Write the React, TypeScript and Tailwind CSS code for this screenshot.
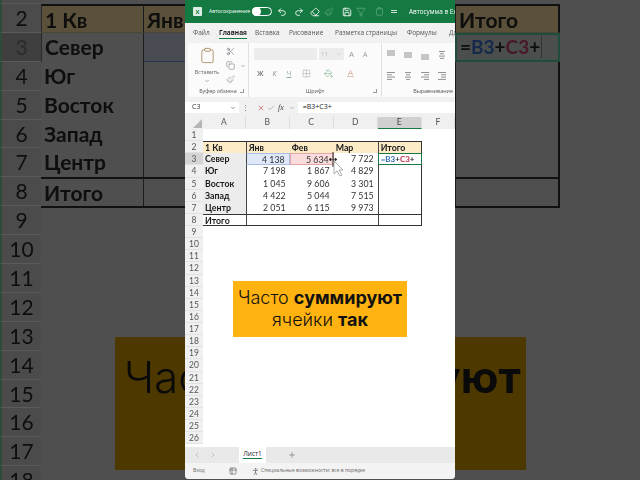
import {
  Baseline,
  Check,
  ChevronDown,
  ChevronLeft,
  ChevronRight,
  Clipboard,
  Copy,
  Eraser,
  Filter,
  Grid2x2,
  PaintBucket,
  Paintbrush,
  PersonStanding,
  Plus,
  Redo2,
  Save,
  Scissors,
  Table2,
  Undo2,
  X,
} from "lucide-react";

const regions = [
  ["Север", "4 138", "5 634", "7 722"],
  ["Юг", "7 198", "1 867", "4 829"],
  ["Восток", "1 045", "9 606", "3 301"],
  ["Запад", "4 422", "5 044", "7 515"],
  ["Центр", "2 051", "6 115", "9 973"],
];
const heads = ["1 Кв", "Янв", "Фев", "Мар", "Итого"];
const ribbonTabs = [
  { label: "Файл", w: "w-[26px]" },
  { label: "Главная", w: "w-[36px]", active: true },
  { label: "Вставка", w: "w-[34px]" },
  { label: "Рисование", w: "w-[46px]" },
  { label: "Разметка страницы", w: "w-[72px]" },
  { label: "Формулы", w: "w-[42px]" },
  { label: "Данные", w: "w-[30px]" },
];

function cellText(r: number, c: number) {
  if (r === 2) return heads[c];
  if (r >= 3 && r <= 7 && c < 4) return regions[r - 3][c];
  if (r === 8 && c === 0) return "Итого";
  return "";
}

// the zoomed sheet behind the window: only what sticks out beside it has text
function backText(r: number, c: number) {
  if (r === 2) return c === 0 || c === 1 || c === 4 ? heads[c] : "";
  return c === 0 ? cellText(r, c) : "";
}

function BackSheet() {
  const rows = Array.from({ length: 18 }, (_, i) => i + 1);
  return (
    <div className="grid grid-cols-[41px_102px_104px_104px_104px_104.7px_1fr] font-['Lato',sans-serif] text-[21px] text-[#0e0e0e] blur-[0.7px]">
      {rows.map((r) => {
        const h = r === 1 ? "h-[4px]" : "h-[28.9px]";
        const inTable = r >= 2 && r <= 8;
        return [
          <div
            key={`n${r}`}
            className={`${h} overflow-hidden border-l-2 border-b border-l-[#2d4a3b] border-b-[#5b5b5b] text-center leading-[28px] ${r === 3 ? "bg-[#3f3f3f] text-[#2b2b2b]" : "bg-[#4b4b4b]"}`}
          >
            {r > 1 ? r : ""}
          </div>,
          ...[0, 1, 2, 3, 4].map((c) => {
            const active = r === 3 && c === 4;
            const bold = c === 0 || r === 2;
            let cls = "bg-[#4f4f4f]";
            if (r === 2) cls = "bg-[#5b503a] border-b border-b-[#4a4638]";
            if (r === 3 && c === 1) cls = "bg-[#484b52] border-b border-b-[#2b3550]";
            if (active) cls = "bg-[#4a4f4d] border-2 border-[#1f4d3a]";
            return (
              <div
                key={`${r}-${c}`}
                className={`${h} overflow-hidden whitespace-nowrap px-[3px] leading-[28px] ${cls} ${bold ? "font-bold" : ""} ${r === 2 || r === 8 || r === 9 ? "border-t-2 border-t-[#111]" : ""} ${inTable && (c === 1 || c === 4) && !active ? "border-l border-l-[#1c1c1c]" : ""} ${inTable && c === 4 && !active ? "border-r-2 border-r-[#111]" : ""} ${inTable && c === 0 && r < 4 ? "border-l border-l-[#2a2a2a]" : ""}`}
              >
                {active ? (
                  <span className="flex items-center text-[19px] font-bold leading-[24px]">
                    =<span className="text-[#16294d]">B3</span>+<span className="text-[#481826]">C3</span>+
                    <span className="ml-[1px] h-[22px] w-px bg-[#333]" />
                  </span>
                ) : (
                  backText(r, c)
                )}
              </div>
            );
          }),
          <div key={`f${r}`} className={`${h} bg-[#4f4f4f]`} />,
        ];
      })}
    </div>
  );
}

function Lines({ kind }: { kind: "l" | "c" | "r" | "top" | "mid" | "bot" | "in" }) {
  const sets: Record<string, number[][]> = {
    l: [[1, 9], [1, 6], [1, 9], [1, 6]],
    c: [[2, 8], [3, 7], [2, 8], [3, 7]],
    r: [[1, 9], [4, 9], [1, 9], [4, 9]],
    in: [[1, 9], [4, 9], [4, 9], [1, 9]],
  };
  const y = { top: [1, 3, 5], mid: [3, 5, 7], bot: [5, 7, 9] }[kind as "top"];
  return (
    <svg width="10" height="10" viewBox="0 0 10 10" className="shrink-0 text-[#777]" stroke="currentColor" strokeWidth="0.8">
      {y
        ? y.map((v) => <line key={v} x1="1" x2="9" y1={v} y2={v} />)
        : sets[kind].map((s, i) => <line key={i} x1={s[0]} x2={s[1]} y1={1.5 + i * 2.3} y2={1.5 + i * 2.3} />)}
    </svg>
  );
}

function TitleBar() {
  return (
    <div className="flex h-[23px] shrink-0 items-center overflow-hidden bg-[#157a42] text-white">
      <div className="ml-[8px] flex h-[9px] w-[9px] shrink-0 items-center justify-center rounded-[1px] bg-[#dfeee5] text-[6px] font-bold leading-none text-[#157a42]">
        X
      </div>
      <span className="ml-[7px] w-[42px] shrink-0 whitespace-nowrap text-[5.1px]">Автосохранение</span>
      <div className="ml-[1px] flex h-[9px] w-[20px] shrink-0 items-center rounded-full border border-white">
        <div className="ml-[-1px] h-[9px] w-[9px] rounded-full bg-white" />
      </div>
      <Undo2 size={10} className="ml-[5px] shrink-0" />
      <Redo2 size={10} className="ml-[7px] shrink-0" />
      <Eraser size={10} className="ml-[6px] shrink-0" />
      <Paintbrush size={10} className="ml-[4px] shrink-0 text-[#4f9b70]" />
      <Save size={10} className="ml-[8px] shrink-0" />
      <Filter size={10} className="ml-[4px] shrink-0 text-[#5da67d]" />
      <Clipboard size={9} className="ml-[9px] shrink-0 text-[#5da67d]" />
      <div className="ml-[7px] h-[3px] w-[6px] shrink-0 border-y border-white/80" />
      <span className="ml-[12px] shrink-0 whitespace-nowrap text-[6.4px]">Автосумма в Excel</span>
    </div>
  );
}

function RibbonTabs() {
  return (
    <div className="flex h-[20px] shrink-0 items-center overflow-hidden pl-[8px] text-[6.5px] text-[#555]">
      {ribbonTabs.map((t) => (
        <div key={t.label} className={`${t.w} shrink-0 whitespace-nowrap`}>
          <span className={t.active ? "border-b border-[#157a42] pb-[1px] font-bold text-[#222]" : ""}>{t.label}</span>
        </div>
      ))}
    </div>
  );
}

function GroupLabel({ text, launcher }: { text: string; launcher?: boolean }) {
  return (
    <div className="relative flex h-[11px] items-center justify-center whitespace-nowrap text-[5.4px] text-[#555]">
      {text}
      {launcher && <span className="absolute right-[4px] top-[3px] h-[4px] w-[4px] border-r border-b border-[#999]" />}
    </div>
  );
}

function Ribbon() {
  return (
    <div className="ml-[3px] flex h-[54px] shrink-0 rounded-l-[3px] bg-[#fbfbfb] text-[#666]">
      <div className="flex w-[61px] shrink-0 flex-col border-r border-[#e0e0e0]">
        <div className="flex flex-1 pt-[4px]">
          <div className="flex w-[38px] flex-col items-center">
            <Clipboard size={17} strokeWidth={1.2} className="text-[#a8875c]" />
            <span className="mt-[6px] text-[5.6px] leading-none">Вставить</span>
            <ChevronDown size={6} className="mt-[2px]" />
          </div>
          <div className="flex flex-col gap-[5px]">
            <Scissors size={9} strokeWidth={1.3} className="text-[#556]" />
            <div className="flex items-center gap-[5px]">
              <Copy size={9} strokeWidth={1.3} />
              <ChevronDown size={6} />
            </div>
            <Paintbrush size={9} strokeWidth={1.3} className="text-[#999]" />
          </div>
        </div>
        <GroupLabel text="Буфер обмена" launcher />
      </div>
      <div className="flex w-[133px] shrink-0 flex-col border-r border-[#e0e0e0]">
        <div className="flex flex-1 flex-col gap-[9px] px-[5px] pt-[5px]">
          <div className="flex h-[12px] items-center">
            <div className="h-[12px] w-[63px] rounded-[1px] bg-[#ececec]" />
            <div className="ml-[2px] flex h-[12px] w-[25px] items-center justify-between rounded-[1px] bg-[#ececec] px-[2px] text-[6px] text-[#bbb]">
              11
              <ChevronDown size={6} />
            </div>
            <span className="ml-[5px] text-[8px] leading-none text-[#999]">A</span>
            <span className="ml-[9px] text-[7px] leading-none text-[#999]">A</span>
          </div>
          <div className="flex items-center text-[#888]">
            <span className="ml-[3px] text-[7px] font-bold leading-none">Ж</span>
            <span className="ml-[9px] text-[7px] italic leading-none">К</span>
            <span className="ml-[10px] text-[7px] underline leading-none text-[#8aa]">Ч</span>
            <Grid2x2 size={9} strokeWidth={1} className="ml-[11px]" />
            <PaintBucket size={9} strokeWidth={1.2} className="ml-[13px] text-[#5a9a6a]" />
            <Baseline size={9} strokeWidth={1.2} className="ml-[13px] text-[#c08060]" />
          </div>
        </div>
        <GroupLabel text="Шрифт" launcher />
      </div>
      <div className="flex min-w-0 flex-1 flex-col">
        <div className="flex flex-1 flex-col gap-[11px] pl-[4px] pt-[7px]">
          <div className="flex gap-[7px]">
            <Lines kind="top" />
            <Lines kind="mid" />
            <Lines kind="bot" />
            <Lines kind="c" />
          </div>
          <div className="flex gap-[7px]">
            <Lines kind="l" />
            <Lines kind="c" />
            <Lines kind="r" />
            <Lines kind="in" />
          </div>
        </div>
        <div className="flex h-[11px] items-center justify-end whitespace-nowrap pr-[2px] text-[5.4px] text-[#555]">Выравнивание</div>
      </div>
    </div>
  );
}

function FormulaBar() {
  return (
    <div className="mt-[5px] flex h-[11px] shrink-0 items-center text-[#777]">
      <div className="flex h-full w-[54px] shrink-0 items-center justify-between bg-white pl-[7px] pr-[3px] text-[7px] text-[#333]">
        C3
        <ChevronDown size={6} />
      </div>
      <span className="ml-[3px] text-[7px] leading-none">⋮</span>
      <X size={8} className="ml-[8px] text-[#c05050]" />
      <Check size={8} className="ml-[2px] text-[#9a9a9a]" />
      <span className="ml-[3px] font-['Liberation_Serif',serif] text-[8px] italic leading-none text-[#444]">fx</span>
      <ChevronDown size={6} className="ml-[5px]" />
      <div className="ml-[3px] flex h-full flex-1 items-center bg-white pl-[5px] text-[7px] text-[#222]">=B3+C3+</div>
    </div>
  );
}

function FrontSheet() {
  const rows = Array.from({ length: 26 }, (_, i) => i + 1);
  const letters = ["A", "B", "C", "D", "E", "F"];
  return (
    <div className="relative min-h-0 flex-1 bg-white">
      <div className="grid h-[16px] grid-cols-[18px_42.7px_44px_44px_44px_44px_1fr] items-end bg-[#f0f0f0] text-center font-['Lato',sans-serif] text-[8.5px] text-[#555]">
        <div className="flex h-full items-end justify-end pb-[1px] pr-[1px]">
          <div className="h-0 w-0 border-b-[9px] border-l-[9px] border-b-[#b5b5b5] border-l-transparent" />
        </div>
        {letters.map((l) => (
          <div key={l} className={`h-[12px] border-r border-[#dcdcdc] leading-[11px] ${l === "E" ? "border-b border-b-[#157a42] bg-[#d0d0d0] text-[#444]" : ""}`}>
            {l}
          </div>
        ))}
      </div>
      <div className="grid auto-rows-[12.13px] grid-cols-[18px_42.7px_44px_44px_44px_44px_1fr] font-['Lato',sans-serif] text-[8.8px] leading-[11.5px] text-[#333]">
        {rows.map((r) => [
          <div key={`n${r}`} className={`border-b border-[#e2e2e2] text-center text-[8.5px] leading-[12px] text-[#555] ${r === 3 ? "bg-[#d4d4d4] text-[#1a7a48]" : "bg-[#f0f0f0]"}`}>
            {r}
          </div>,
          ...[0, 1, 2, 3, 4].map((c) => {
            const active = r === 3 && c === 4;
            const inTable = r >= 2 && r <= 8;
            let bg = "";
            if (r === 2) bg = "bg-[#fdebc8]";
            else if (r >= 3 && r <= 7 && c === 0) bg = "bg-[#ececec]";
            let frame = "";
            if (r === 3 && c === 1) frame = "bg-[#dfe8f8] border border-[#a9c0e6]";
            if (r === 3 && c === 2) frame = "bg-[#fbdcdc] border border-[#e8a5a5]";
            if (active) frame = "border border-[#157a42]";
            return (
              <div
                key={`${r}-${c}`}
                className={`overflow-visible whitespace-nowrap pl-[2px] ${bg} ${frame} ${c === 0 || r === 2 ? "font-bold text-[#1a1a1a]" : ""} ${c > 0 && r !== 2 ? "pr-[4px] text-right" : ""} ${r === 2 || r === 8 ? "border-t border-t-[#333]" : ""} ${r === 8 ? "border-b border-b-[#333]" : ""} ${inTable && (c === 1 || c === 4) && !active ? "border-l border-l-[#444]" : ""} ${inTable && c === 4 && !active ? "border-r border-r-[#333]" : ""}`}
              >
                {active ? (
                  <span className="block text-left text-[8px] font-bold leading-[10px] text-[#222]">
                    <span className="text-[#2f6db5]">=B3</span>+<span className="text-[#c0304a]">C3</span>+
                  </span>
                ) : (
                  cellText(r, c)
                )}
              </div>
            );
          }),
          <div key={`f${r}`} />,
        ])}
      </div>
      <svg width="20" height="26" viewBox="0 0 20 26" className="absolute left-[141px] top-[38px]">
        <line x1="7" y1="1" x2="7" y2="16" stroke="#222" strokeWidth="1" />
        <path d="M3 8.5h8M3 8.5l2-1.5v3zM11 8.5l-2-1.5v3z" fill="#222" stroke="#222" strokeWidth="0.5" />
        <path d="M8 10v13l3-3 3 5 2-1-3-5h4z" fill="#fff" stroke="#999" strokeWidth="0.8" />
      </svg>
    </div>
  );
}

function SheetTabs() {
  return (
    <div className="flex h-[16px] shrink-0 items-stretch bg-[#e9e9e9] text-[#aaa]">
      <ChevronLeft size={8} className="ml-[8px] self-center" />
      <ChevronRight size={8} className="ml-[8px] self-center" />
      <div className="ml-[22px] flex w-[27px] flex-col items-center justify-center bg-white text-[6.5px] font-medium leading-none text-[#222]">
        <span className="border-b border-[#157a42] pb-[1px]">Лист1</span>
      </div>
      <Plus size={8} className="ml-[22px] self-center text-[#777]" />
    </div>
  );
}

function StatusBar() {
  return (
    <div className="flex h-[16px] shrink-0 items-center bg-[#f3f3f3] text-[5px] text-[#666]">
      <span className="ml-[8px] w-[36px]">Вход</span>
      <Table2 size={8} className="shrink-0" />
      <PersonStanding size={9} className="ml-[14px] shrink-0" />
      <span className="ml-[1px] whitespace-nowrap">Специальные возможности: все в порядке</span>
    </div>
  );
}

export default function App() {
  return (
    <div className="relative h-[480px] w-[640px] overflow-hidden bg-[#4f4f4f] font-['Open_Sans',sans-serif]">
      <BackSheet />

      <div className="absolute left-[115px] top-[337px] h-[133px] w-[411px] whitespace-nowrap bg-[#4d3800] pl-[9px] pt-[12px] font-['Inter',sans-serif] text-[43.5px] font-light leading-[56px] text-[#0a0a0a] blur-[0.5px]">
        Часто <b className="font-bold">суммируют</b>
      </div>

      <div className="absolute left-[185px] top-0 flex h-[479px] w-[270px] flex-col overflow-hidden rounded-b-[4px] bg-[#f1f1f1] blur-[0.25px]">
        <TitleBar />
        <RibbonTabs />
        <Ribbon />
        <FormulaBar />
        <FrontSheet />
        <SheetTabs />
        <StatusBar />
        <div className="absolute left-[48px] top-[281px] flex h-[56px] w-[174px] flex-col items-center justify-center whitespace-nowrap bg-[#ffb310] font-['Inter',sans-serif] text-[18px] font-light leading-[22px] text-[#111]">
          <div>
            Часто <b className="font-bold">суммируют</b>
          </div>
          <div>
            ячейки <b className="font-bold">так</b>
          </div>
        </div>
      </div>
    </div>
  );
}
